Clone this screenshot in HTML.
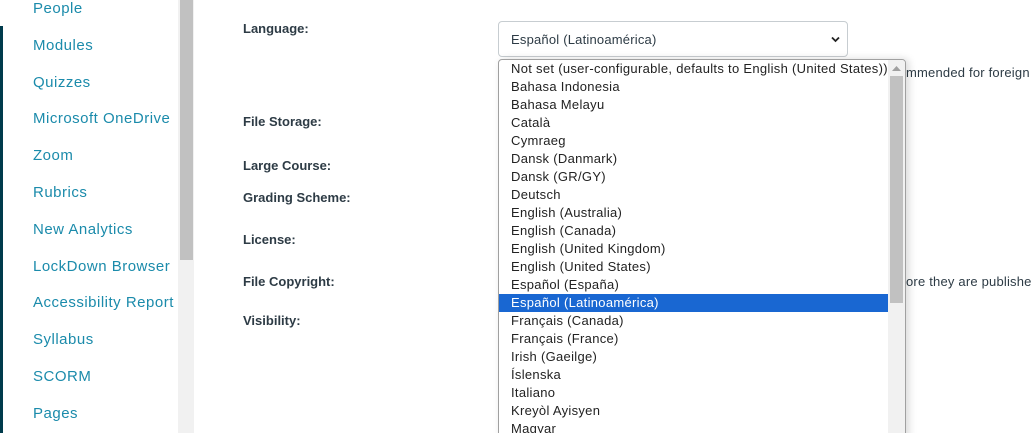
<!DOCTYPE html>
<html><head><style>
html,body{margin:0;width:1034px;height:433px;overflow:hidden}
body{background:#fff;font-family:"Liberation Sans",sans-serif;position:relative}
.stripe{position:absolute;left:0;top:26px;width:3px;height:407px;background:#003b4c}
.nav{position:absolute;left:33px;font-size:15px;color:#1b8bab;line-height:18px;letter-spacing:0.5px;white-space:nowrap}
.track{position:absolute;left:178px;top:0;width:16px;height:433px;background:#f1f1f1}
.thumb{position:absolute;left:180px;top:0;width:13px;height:260px;background:#c1c1c1}
.lab{position:absolute;left:243px;font-size:13px;font-weight:bold;color:#2d3b45;line-height:16px}
.sel{position:absolute;left:498px;top:21px;width:350px;height:36px;border:1px solid #c7cdd1;border-radius:4px;box-sizing:border-box;font-size:13px;color:#2d3b45;padding:10px 12px;letter-spacing:0.2px}
.dd{position:absolute;left:498px;top:59px;width:408px;height:380px;border:1px solid #a0a0a0;border-radius:4px 4px 0 0;background:#fff;box-shadow:3px 0 8px rgba(0,0,0,.15);box-sizing:border-box;overflow:hidden}
.it{height:18px;line-height:17px;font-size:13px;color:#222;padding-left:12px;width:378px;white-space:nowrap;letter-spacing:0.3px}
.hi{background:#1967d2;color:#fff}
.sb{position:absolute;right:0;top:0;width:17px;height:100%;background:#f1f1f1}
.st{position:absolute;right:2px;top:16px;width:13px;height:227px;background:#c1c1c1}
.txt{position:absolute;font-size:13px;color:#2d3b45;line-height:16px;white-space:nowrap;letter-spacing:0.2px}
</style></head><body>
<div class="stripe"></div>
<div class="nav" style="top:0px">People</div>
<div class="nav" style="top:37px">Modules</div>
<div class="nav" style="top:74px">Quizzes</div>
<div class="nav" style="top:110px">Microsoft OneDrive</div>
<div class="nav" style="top:147px">Zoom</div>
<div class="nav" style="top:184px">Rubrics</div>
<div class="nav" style="top:221px">New Analytics</div>
<div class="nav" style="top:258px">LockDown Browser</div>
<div class="nav" style="top:294px">Accessibility Report</div>
<div class="nav" style="top:331px">Syllabus</div>
<div class="nav" style="top:368px">SCORM</div>
<div class="nav" style="top:405px">Pages</div>
<div class="track"></div><div class="thumb"></div>
<div class="lab" style="top:21px">Language:</div>
<div class="lab" style="top:114px">File Storage:</div>
<div class="lab" style="top:158px">Large Course:</div>
<div class="lab" style="top:190px">Grading Scheme:</div>
<div class="lab" style="top:232px">License:</div>
<div class="lab" style="top:274px">File Copyright:</div>
<div class="lab" style="top:313px">Visibility:</div>
<div class="sel">Español (Latinoamérica)<svg style="position:absolute;right:7px;top:14px" width="9" height="7" viewBox="0 0 9 7"><path d="M1 1.5L4.5 5 8 1.5" stroke="#222" stroke-width="1.8" fill="none"/></svg></div>
<div class="txt" style="left:906px;top:65px">mmended for foreign lan</div>
<div class="txt" style="left:906px;top:274px">ore they are publishe</div>
<div class="dd">
<div class="it">Not set (user-configurable, defaults to English (United States))</div>
<div class="it">Bahasa Indonesia</div>
<div class="it">Bahasa Melayu</div>
<div class="it">Català</div>
<div class="it">Cymraeg</div>
<div class="it">Dansk (Danmark)</div>
<div class="it">Dansk (GR/GY)</div>
<div class="it">Deutsch</div>
<div class="it">English (Australia)</div>
<div class="it">English (Canada)</div>
<div class="it">English (United Kingdom)</div>
<div class="it">English (United States)</div>
<div class="it">Español (España)</div>
<div class="it hi">Español (Latinoamérica)</div>
<div class="it">Français (Canada)</div>
<div class="it">Français (France)</div>
<div class="it">Irish (Gaeilge)</div>
<div class="it">Íslenska</div>
<div class="it">Italiano</div>
<div class="it">Kreyòl Ayisyen</div>
<div class="it">Magyar</div>
<div class="sb"><svg style="position:absolute;left:4px;top:5px" width="9" height="6"><path d="M0 6L4.5 1 9 6Z" fill="#a0a0a0"/></svg><div class="st"></div></div>
</div>
</body></html>
